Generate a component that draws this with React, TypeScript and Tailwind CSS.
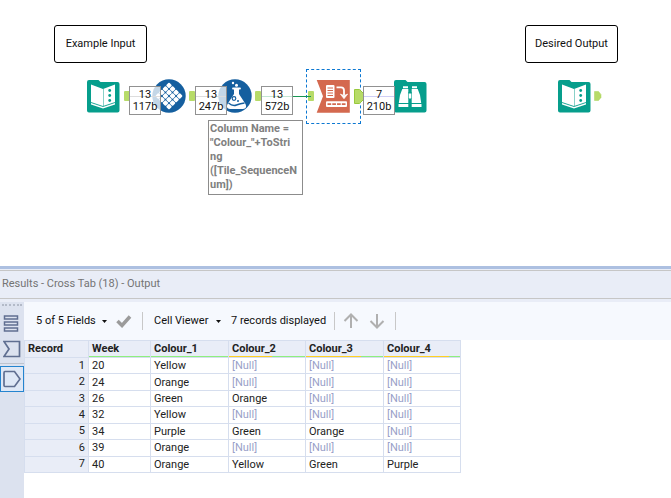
import React from 'react';
import clsx from 'clsx';

interface Column {
  name: string;
  width: string;
  filled: number;
}

interface LinkLabelProps {
  records: number;
  size: string;
  line?: string;
  className: string;
}

const columns: Column[] = [
  { name: 'Week', width: 'w-[62px]', filled: 100 },
  { name: 'Colour_1', width: 'w-[78px]', filled: 100 },
  { name: 'Colour_2', width: 'w-[77px]', filled: 43 },
  { name: 'Colour_3', width: 'w-[78px]', filled: 29 },
  { name: 'Colour_4', width: 'w-[77px]', filled: 14 }
];

const rows: (string | null)[][] = [
  ['20', 'Yellow', null, null, null],
  ['24', 'Orange', null, null, null],
  ['26', 'Green', 'Orange', null, null],
  ['32', 'Yellow', null, null, null],
  ['34', 'Purple', 'Green', 'Orange', null],
  ['39', 'Orange', null, null, null],
  ['40', 'Orange', 'Yellow', 'Green', 'Purple']
];

function InputTool() {
  return (
    <svg viewBox="0 0 34 34" className="block size-[34px]">
      <path d="M1 3Q1 1 3 1H12.500L14.500 3H31.500Q33.500 3 33.500 5V31.500Q33.500 33.500 31.500 33.500H3Q1 33.500 1 31.500Z" fill="#069e8c" />
      <path d="M5 5.500L17 10L29 5.500V25.500L17 29.500L5 25.500Z" fill="#fff" />
      <path d="M5 23.500L17 27.500L29 23.500" fill="none" stroke="#069e8c" strokeWidth="0.900" />
      <path d="M17.500 10V27" stroke="#069e8c" strokeOpacity="0.600" strokeWidth="0.800" />
      <g fill="#069e8c">
        <circle cx="23.700" cy="11.500" r="1.400" />
        <circle cx="23.700" cy="16.500" r="1.400" />
        <circle cx="23.700" cy="21.500" r="1.400" />
      </g>
    </svg>
  );
}

function TileTool() {
  const cells = [0, 1, 2, 3];
  return (
    <svg viewBox="0 0 34 34" className="block size-[34px]">
      <circle cx="17" cy="17" r="16.700" fill="#155f9f" />
      <g transform="rotate(45 17 17)" fill="#fff">
        {cells.map((r) =>
          cells.map((c) => (
            <rect key={`${r}-${c}`} x={7.3 + c * 5} y={7.3 + r * 5} width="4.400" height="4.400" rx="1" />
          ))
        )}
      </g>
    </svg>
  );
}

function FormulaTool() {
  return (
    <svg viewBox="0 0 34 34" className="block size-[34px]">
      <circle cx="17" cy="17" r="16.700" fill="#155f9f" />
      <circle cx="15" cy="4" r="1.200" fill="#fff" />
      <circle cx="18.500" cy="6.300" r="1.500" fill="#fff" />
      <path d="M15 9.500H22" stroke="#fff" strokeWidth="1.800" strokeLinecap="round" />
      <path
        d="M16 10H21V15L27.500 25Q29.500 29.500 25 30H12Q7.500 29.500 9.500 25L16 15Z"
        fill="#fff"
      />
      <path d="M10.500 24Q14.500 27.500 18.500 26T26.500 24" fill="none" stroke="#155f9f" strokeWidth="1.400" />
      <circle cx="16" cy="19.500" r="1.800" fill="none" stroke="#155f9f" strokeWidth="1.200" />
      <circle cx="20" cy="22" r="1" fill="#155f9f" />
    </svg>
  );
}

function CrossTabTool() {
  return (
    <svg viewBox="0 0 34 34" className="block size-[34px]">
      <path d="M0.700 1H33.800V33.700H0.700L7 17.300Z" fill="#d4694f" />
      <rect x="10" y="6" width="8.500" height="13" rx="1" fill="#fff" />
      <path d="M11.500 9H17M11.500 11.500H17M11.500 14H17M11.500 16.500H17" stroke="#d4694f" strokeWidth="1.100" />
      <path d="M20.500 8.300H25Q28 8.300 28 11.500V16" fill="none" stroke="#fff" strokeWidth="1.800" />
      <path d="M24.300 15L28 16.500L31.700 15L28 19.800Z" fill="#fff" stroke="#fff" strokeWidth="0.600" />
      <rect x="10" y="22.300" width="21" height="5.700" rx="1" fill="#fff" />
      <path d="M11.500 25.200H29.500" stroke="#d4694f" strokeWidth="1.700" strokeDasharray="3.700 1.067" />
    </svg>
  );
}

function BrowseTool() {
  return (
    <svg viewBox="0 0 34 34" className="block size-[34px]">
      <path d="M1 3Q1 1 3 1H12.500L14.500 3H31.500Q33.500 3 33.500 5V31.500Q33.500 33.500 31.500 33.500H3Q1 33.500 1 31.500Z" fill="#069e8c" />
      <g fill="#fff">
        <path d="M10 7.300H15V9.300H10ZM19 7.300H24V9.300H19Z" />
        <path d="M9.300 10H15.300V24H5.800L7 16ZM18.700 10H24.700L27 16L28.200 24H18.700Z" />
        <path d="M15 14.500H19V19.500H15Z" />
        <path d="M5.500 25H15.300V28H5.500ZM18.700 25H28.500V28H18.700Z" />
      </g>
      <path d="M15.500 13V20M18.500 13V20" stroke="#069e8c" strokeWidth="0.600" />
    </svg>
  );
}

function LinkLabel({ records, size, line, className }: LinkLabelProps) {
  return (
    <div
      className={clsx(
        'absolute top-[86px] flex h-[29px] w-[32px] flex-col items-center justify-center border border-[#919191] bg-white/75 leading-3',
        className
      )}
    >
      {line && <span className={clsx('absolute top-[9px] right-0 left-0 h-px', line)} />}
      <span className="relative">{records}</span>
      <span className="relative">{size}</span>
    </div>
  );
}

function Canvas() {
  return (
    <main className="relative h-[266px] overflow-hidden bg-white">
      <div className="absolute top-[25px] left-[54px] flex h-[38px] w-[93px] items-center justify-center rounded-[3px] border border-black">
        Example Input
      </div>
      <div className="absolute top-[25px] left-[525px] flex h-[38px] w-[93px] items-center justify-center rounded-[3px] border border-black">
        Desired Output
      </div>

      {/* Tools */}
      <div className="absolute top-[79px] left-[86px]"><InputTool /></div>
      <div className="absolute top-[79px] left-[152px]"><TileTool /></div>
      <div className="absolute top-[79px] left-[218px]"><FormulaTool /></div>
      <div className="absolute top-[69px] left-[306px] size-[55px] border border-dashed border-[#0c78d2]" />
      <div className="absolute top-[79px] left-[316px]"><CrossTabTool /></div>
      <div className="absolute top-[79px] left-[393px]"><BrowseTool /></div>
      <div className="absolute top-[79px] left-[557px]"><InputTool /></div>

      {/* Anchors */}
      <div className="absolute top-[91px] left-[124px] h-[10px] w-[6px] rounded-[1px] bg-[#b7db68]" />
      <div className="absolute top-[91px] left-[189px] h-[10px] w-[6px] rounded-[1px] bg-[#b7db68]" />
      <div className="absolute top-[91px] left-[255px] h-[10px] w-[6px] rounded-[1px] bg-[#b7db68]" />
      <div className="absolute top-[91px] left-[308px] h-[10px] w-[6px] rounded-[1px] bg-[#b7db68]" />
      <div className="absolute top-[96px] left-[292px] h-px w-[19px] bg-[#189653]" />
      <svg viewBox="0 0 10 15" className="absolute top-[89px] left-[354px] h-[15px] w-[10px]">
        <path d="M0.500 0.500H5.500L9.500 4.500V10.500L5.500 14.500H0.500Z" fill="#b7db68" stroke="#98c93c" />
      </svg>
      <svg viewBox="0 0 8 10" className="absolute top-[91px] left-[594px] h-[10px] w-[8px]">
        <path d="M0.500 0.500H4.500L7 3.500V6.500L4.500 9.500H0.500Z" fill="#b7db68" stroke="#a9d35b" strokeWidth="0.500" />
      </svg>

      <LinkLabel records={13} size="117b" line="bg-[#dddddd]" className="left-[129px]" />
      <LinkLabel records={13} size="247b" line="bg-[#dddddd]" className="left-[195px]" />
      <LinkLabel records={13} size="572b" line="bg-[#c4e6d3]" className="left-[261px]" />
      <LinkLabel records={7} size="210b" line="bg-[#cfcff5]" className="left-[363px]" />

      <div className="absolute top-[120px] left-[208px] h-[75px] w-[95px] border border-[#8c8c8c] bg-white px-px py-px font-bold leading-[14px] whitespace-nowrap text-[#808080]">
        Column Name =<br />
        "Colour_"+ToStri<br />
        ng<br />
        ([Tile_SequenceN<br />
        um])
      </div>
    </main>
  );
}

function SideRail() {
  return (
    <nav className="flex w-6 shrink-0 flex-col bg-[#dce2ef]">
      <div className="mx-[2px] mt-[2px] h-[2px] border-t-2 border-dotted border-[#b3bac8]" />
      <button aria-label="Messages" className="mt-[7px] flex h-[22px] items-center justify-center">
        <svg viewBox="0 0 18 20" className="h-[20px] w-[18px]" fill="none" stroke="#606f91" strokeWidth="1.500">
          <rect x="1.500" y="2" width="13" height="3" />
          <rect x="1.500" y="8" width="13" height="3" />
          <rect x="1.500" y="14" width="13" height="3" />
        </svg>
      </button>
      <button aria-label="Input" className="mt-[3px] flex h-[22px] items-center justify-center">
        <svg viewBox="0 0 18 18" className="size-[18px]" fill="none" stroke="#606f91" strokeWidth="1.700">
          <path d="M1 1.500H16.500V16.500H1L6 9Z" />
        </svg>
      </button>
      <div className="mt-[3px] h-px bg-[#bec4cf]" />
      <button
        aria-label="Output"
        className="mt-[2px] flex h-[26px] items-center justify-center border border-[#2484cf] bg-[#dfe8f6]"
      >
        <svg viewBox="0 0 18 18" className="size-[18px]" fill="none" stroke="#606f91" strokeWidth="1.700">
          <path d="M2 1.500H11.500L17 9L11.500 16.500H2Q1 16.500 1 15V3Q1 1.500 2 1.500Z" />
        </svg>
      </button>
    </nav>
  );
}

function Caret() {
  return (
    <svg viewBox="0 0 5 3" className="h-[3px] w-[5px]">
      <path d="M0 0H5L2.500 3Z" fill="#111" />
    </svg>
  );
}

function Toolbar() {
  return (
    <div className="flex h-[38px] items-center bg-[#f6f9fe] pl-3 whitespace-nowrap">
      <button className="flex w-[71px] items-center justify-between">
        5 of 5 Fields <Caret />
      </button>
      <button aria-label="Apply" className="ml-[9px]">
        <svg viewBox="0 0 16 14" className="h-[14px] w-[16px]">
          <path d="M1.500 7L6 11.500L14 2.500" fill="none" stroke="#9b9b9b" strokeWidth="3.500" />
        </svg>
      </button>
      <div className="ml-[10px] h-[18px] w-px bg-[#c8c8c8]" />
      <button className="ml-[11px] flex w-[67px] items-center justify-between">
        Cell Viewer <Caret />
      </button>
      <span className="ml-[10px] w-[103px]">7 records displayed</span>
      <div className="h-[18px] w-px bg-[#c8c8c8]" />
      <button aria-label="Previous" className="ml-[8px]">
        <svg viewBox="0 0 16 16" className="size-4" fill="none" stroke="#b0b0b0" strokeWidth="2">
          <path d="M8 15V2M1.500 8L8 1.500L14.500 8" />
        </svg>
      </button>
      <button aria-label="Next" className="ml-[10px]">
        <svg viewBox="0 0 16 16" className="size-4" fill="none" stroke="#b0b0b0" strokeWidth="2">
          <path d="M8 1V14M1.500 8L8 14.500L14.500 8" />
        </svg>
      </button>
      <div className="ml-[10px] h-[18px] w-px bg-[#c8c8c8]" />
    </div>
  );
}

function ResultsTable() {
  return (
    <table className="h-[133px] w-[436px] table-fixed border-collapse leading-[14px] text-[#222222]">
      <thead>
        <tr className="h-[17px] bg-[#e9edf7] text-left align-top leading-[15px]">
          <th className="w-[64px] border border-[#d6deee] px-[3px] py-0">Record</th>
          {columns.map((column) => (
            <th key={column.name} className={clsx('border border-[#d6deee] p-0', column.width)}>
              <div className="px-[3px]">{column.name}</div>
              <div className="flex h-px bg-[#8eef7e]">
                <div className="bg-[#ffd022]" style={{ width: column.filled < 100 ? `${100 - column.filled}%` : 0 }} />
              </div>
            </th>
          ))}
        </tr>
      </thead>
      <tbody>
        {rows.map((row, i) => (
          <tr key={i}>
            <td className="border border-[#d6deee] bg-[#e9edf7] px-[3px] py-0 text-right">{i + 1}</td>
            {row.map((value, j) => (
              <td
                key={j}
                className={clsx('border border-[#d6deee] px-[3px] pt-px pb-0', value === null && 'text-[#9a9fc8]')}
              >
                {value ?? '[Null]'}
              </td>
            ))}
          </tr>
        ))}
      </tbody>
    </table>
  );
}

export default function App() {
  return (
    <div className="flex min-h-screen flex-col bg-white font-['Roboto','Noto_Sans',sans-serif] text-[11px] text-[#111111]">
      <Canvas />
      <section className="flex flex-1 flex-col">
        <div className="h-[3px] bg-[#adc0e1]" />
        <div className="h-px bg-[#e9edf7]" />
        <h2 className="flex h-[29px] items-center border-y border-[#c6c6c6] bg-[#e9edf7] pl-[2px] text-[#747474]">
          Results - Cross Tab (18) - Output
        </h2>
        <div className="h-[3px] bg-[#e9edf7]" />
        <div className="flex flex-1">
          <SideRail />
          <div className="min-w-0 flex-1">
            <Toolbar />
            <ResultsTable />
          </div>
        </div>
      </section>
    </div>
  );
}
